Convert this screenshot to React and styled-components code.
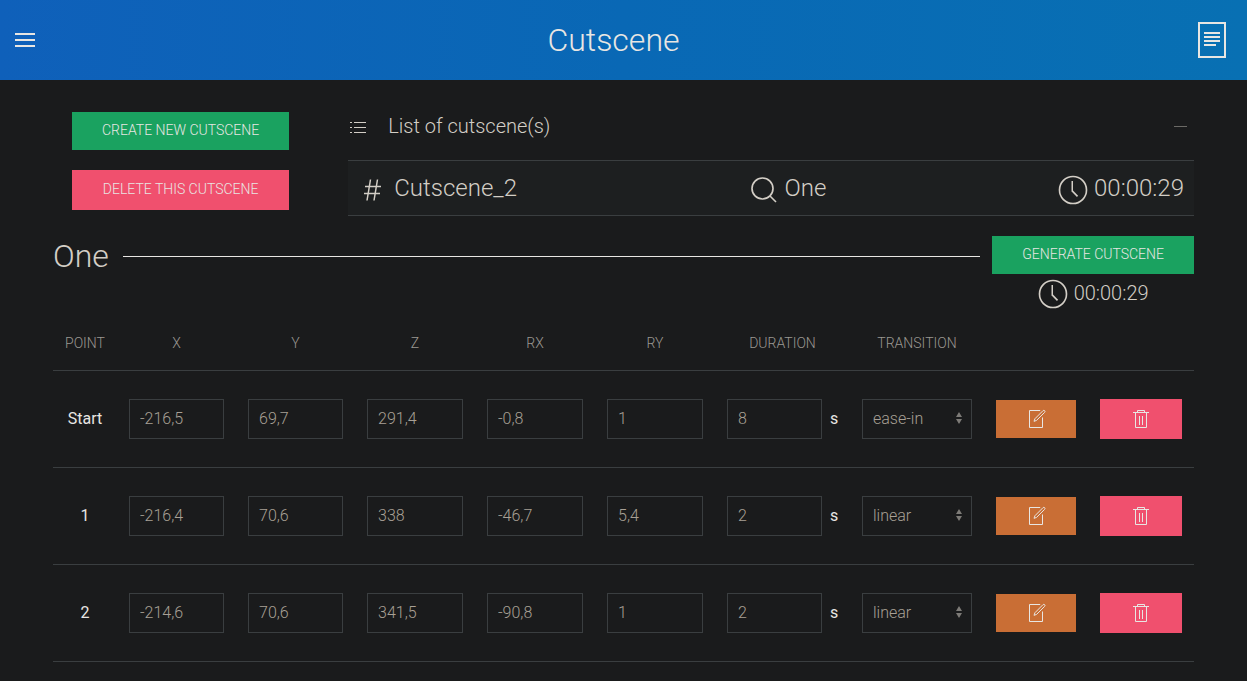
import React from "react";
import styled, { createGlobalStyle } from "styled-components";

const GlobalStyle = createGlobalStyle`
  *, *::before, *::after { box-sizing: border-box; }
  body {
    margin: 0;
    background: #1a1b1c;
    color: #d3cec6;
    font-family: Roboto, "Liberation Sans", sans-serif;
    font-size: 16px;
    font-weight: 300;
    line-height: 24px;
  }
`;

const Header = styled.header`
  display: flex;
  align-items: center;
  justify-content: space-between;
  height: 80px;
  padding: 0 15px;
  background: linear-gradient(to right, #0f60ba, #0968b5 50%, #0870b3);
  color: #e8e6e3;
`;

const PageTitle = styled.h1`
  margin: 0;
  font-size: 32px;
  font-weight: 300;
  line-height: 40px;
`;

const IconButton = styled.button`
  display: flex;
  padding: 0;
  border: 0;
  background: none;
  color: inherit;
  cursor: pointer;
`;

const Container = styled.main`
  padding: 32px 53px 0;
`;

const Top = styled.section`
  display: grid;
  grid-template-columns: calc(25% - 30px) 1fr;
  gap: 40px;
  align-items: start;
`;

const Actions = styled.div`
  display: grid;
  justify-content: center;
  gap: 20px;
`;

const tones = { green: "#1aa260", red: "#f0506e", orange: "#c96e35" };

const Button = styled.button`
  display: flex;
  align-items: center;
  justify-content: center;
  height: ${(p) => (p.$tone === "red" ? 40 : 38)}px;
  padding: 0 30px 2px;
  border: 0;
  background: ${(p) => tones[p.$tone]};
  color: #e8e6e3;
  font: 300 14px/36px Roboto, "Liberation Sans", sans-serif;
  text-transform: uppercase;
  white-space: nowrap;
  cursor: pointer;
`;

const RowButton = styled(Button)`
  padding: 0 ${(p) => (p.$tone === "red" ? 31 : 30)}px;
`;

const ListHeader = styled.div`
  display: flex;
  align-items: center;
  gap: 20px;
  height: 28px;
  margin-bottom: 20px;
  padding-right: 7px;

  > svg { margin-top: 4px; }
`;

const ListTitle = styled.h2`
  flex: 1;
  margin: 0;
  font-size: 20px;
  font-weight: 300;
  line-height: 28px;
`;

const ListRow = styled.div`
  display: flex;
  align-items: center;
  justify-content: space-between;
  height: 56px;
  padding: 0 10px 0 15px;
  border: solid #3a3e40;
  border-width: 1px 0;
  background: #1d1f20;
`;

const IconText = styled.span`
  display: flex;
  align-items: center;
  justify-self: center;
  gap: ${(p) => p.$gap || 6}px;
  font-size: ${(p) => (p.$small ? 20 : 24)}px;
  line-height: 30px;

  svg { margin-top: ${(p) => (p.$small ? 2 : 4)}px; }
`;

const Section = styled.section`
  display: grid;
  grid-template-columns: auto 1fr auto;
  column-gap: 12px;
  margin-top: 20px;
`;

const SectionTitle = styled.h2`
  margin: 0;
  font-size: 32px;
  font-weight: 300;
  line-height: 40px;
`;

const Rule = styled.hr`
  justify-self: stretch;
  height: 1px;
  margin: 20px 0 0 2px;
  border: 0;
  background: #e8e6e3;
`;

const Generate = styled.div`
  display: grid;
  row-gap: 3px;
`;

const Table = styled.table`
  width: 100%;
  margin-top: 7px;
  border-collapse: collapse;
  table-layout: fixed;

  tr { border-bottom: 1px solid #3a3e40; }
`;

const HeadCell = styled.th`
  width: ${(p) => (p.$width ? p.$width + "px" : "auto")};
  height: 54px;
  padding: 0;
  color: #9a9892;
  font-size: 14px;
  font-weight: 300;
  text-transform: uppercase;
`;

const Cell = styled.td`
  height: 97px;
  padding: 0 12px;
  font-weight: 400;
  color: #e8e6e3;
  text-align: ${(p) => (p.$center ? "center" : "left")};
`;

const Input = styled.input`
  display: block;
  width: 100%;
  height: 40px;
  padding: 0 10px;
  border: 1px solid #3a3e40;
  border-radius: 0;
  background: transparent;
  color: #a8a095;
  font: 300 16px/38px Roboto, "Liberation Sans", sans-serif;
`;

const Duration = styled.label`
  display: grid;
  grid-template-columns: 1fr 8px;
  align-items: center;
  gap: 8px;
`;

const SelectBox = styled.div`
  position: relative;

  svg {
    position: absolute;
    top: 10px;
    right: 1px;
    pointer-events: none;
  }
`;

const Select = styled(Input)`
  appearance: none;
`;

const svgProps = { viewBox: "0 0 20 20", fill: "none", stroke: "currentColor", "aria-hidden": true };

const MenuIcon = () => (
  <svg {...svgProps} width="20" height="20" stroke="none" fill="currentColor">
    <rect y="9" width="20" height="2" />
    <rect y="3" width="20" height="2" />
    <rect y="15" width="20" height="2" />
  </svg>
);

const FileIcon = () => (
  <svg {...svgProps} width="40" height="40" stroke="none" fill="currentColor">
    <rect x="3.5" y="1.5" width="13" height="17" fill="none" stroke="currentColor" />
    <path d="M6 6h8v1H6zM6 8h8v1H6zM6 10h8v1H6zM6 12h6v1H6z" />
  </svg>
);

const ListIcon = () => (
  <svg {...svgProps} width="20" height="20" stroke="none" fill="currentColor">
    <path d="M6 4h12v1H6zM6 9h12v1H6zM6 14h12v1H6zM2 4h2v1H2zM2 9h2v1H2zM2 14h2v1H2z" />
  </svg>
);

const HashIcon = () => (
  <svg {...svgProps} width="20" height="22" viewBox="0 0 20 22" strokeWidth="1.5">
    <path d="M7.5 0.5 4 21.5M14.5 0.5 11 21.5M2 7.5H18M1 14.5H17" />
  </svg>
);

const SearchIcon = () => (
  <svg {...svgProps} width="30" height="30" strokeWidth="1.1">
    <circle cx="9" cy="9" r="7" />
    <path d="M14 14 18 18" />
  </svg>
);

const ClockIcon = () => (
  <svg {...svgProps} width="30" height="30">
    <circle cx="10" cy="10" r="9" strokeWidth="1.1" />
    <rect x="9" y="4" width="1" height="7" stroke="none" fill="currentColor" />
    <path d="M13.018 14.197 9.445 10.625" strokeWidth="1.1" />
  </svg>
);

const CollapseIcon = () => (
  <svg width="13" height="13" viewBox="0 0 13 13" aria-hidden="true">
    <rect y="6" width="13" height="1" fill="#6b6a66" />
  </svg>
);

const SortIcon = () => (
  <svg width="24" height="20" viewBox="0 0 24 20" fill="#7d7b77" aria-hidden="true">
    <path d="M12 3 15 8 9 8ZM12 15 9 10 15 10Z" />
  </svg>
);

const EditIcon = () => (
  <svg {...svgProps} width="20" height="20">
    <path
      d="M18.65 1.68C18.41 1.45 18.109 1.33 17.81 1.33 17.499 1.33 17.209 1.45 16.98 1.68L8.92 9.76 8 12.33 10.55 11.41 18.651 3.34C19.12 2.87 19.12 2.15 18.65 1.68Z"
    />
    <path d="M16.5 8.482V18.5H3.5V1.5H14.211" />
  </svg>
);

const TrashIcon = () => (
  <svg {...svgProps} width="20" height="20">
    <path d="M6.5 3V1.5h7V3" />
    <path d="M4.5 4v14.5h11V4" />
    <path d="M8 7h1v9H8zM11 7h1v9h-1zM2 3h16v1H2z" stroke="none" fill="currentColor" />
  </svg>
);

const columns = [
  { label: "Point", width: 64 },
  { label: "X", width: 119 },
  { label: "Y", width: 119 },
  { label: "Z" },
  { label: "RX" },
  { label: "RY" },
  { label: "Duration", width: 135 },
  { label: "Transition", width: 134 },
  { label: "", width: 104 },
  { label: "", width: 106 },
];

const points = [
  { name: "Start", coords: ["-216,5", "69,7", "291,4", "-0,8", "1"], duration: "8", transition: "ease-in" },
  { name: "1", coords: ["-216,4", "70,6", "338", "-46,7", "5,4"], duration: "2", transition: "linear" },
  { name: "2", coords: ["-214,6", "70,6", "341,5", "-90,8", "1"], duration: "2", transition: "linear" },
];

function PointRow({ point }) {
  return (
    <tr>
      <Cell $center>{point.name}</Cell>
      {point.coords.map((value, i) => (
        <Cell key={i}>
          <Input aria-label={`${point.name} ${columns[i + 1].label}`} defaultValue={value} />
        </Cell>
      ))}
      <Cell>
        <Duration>
          <Input aria-label={`${point.name} duration`} defaultValue={point.duration} />s
        </Duration>
      </Cell>
      <Cell>
        <SelectBox>
          <Select as="select" aria-label={`${point.name} transition`} defaultValue={point.transition}>
            <option>linear</option>
            <option>ease-in</option>
          </Select>
          <SortIcon />
        </SelectBox>
      </Cell>
      <Cell>
        <RowButton $tone="orange" aria-label={`Edit ${point.name}`}><EditIcon /></RowButton>
      </Cell>
      <Cell>
        <RowButton $tone="red" aria-label={`Delete ${point.name}`}><TrashIcon /></RowButton>
      </Cell>
    </tr>
  );
}

export default function App() {
  return (
    <>
      <GlobalStyle />
      <Header>
        <IconButton aria-label="Menu"><MenuIcon /></IconButton>
        <PageTitle>Cutscene</PageTitle>
        <IconButton aria-label="Document"><FileIcon /></IconButton>
      </Header>
      <Container>
        <Top>
          <Actions>
            <Button $tone="green">Create new cutscene</Button>
            <Button $tone="red">Delete this cutscene</Button>
          </Actions>
          <div>
            <ListHeader>
              <ListIcon />
              <ListTitle>List of cutscene(s)</ListTitle>
              <IconButton aria-label="Collapse list"><CollapseIcon /></IconButton>
            </ListHeader>
            <ListRow>
              <IconText $gap={11}><HashIcon />Cutscene_2</IconText>
              <IconText><SearchIcon />One</IconText>
              <IconText><ClockIcon />00:00:29</IconText>
            </ListRow>
          </div>
        </Top>
        <Section>
          <SectionTitle>One</SectionTitle>
          <Rule />
          <Generate>
            <Button $tone="green">Generate cutscene</Button>
            <IconText $small><ClockIcon />00:00:29</IconText>
          </Generate>
        </Section>
        <Table>
          <thead>
            <tr>
              {columns.map((column, i) => (
                <HeadCell key={i} $width={column.width}>{column.label}</HeadCell>
              ))}
            </tr>
          </thead>
          <tbody>
            {points.map((point) => <PointRow key={point.name} point={point} />)}
          </tbody>
        </Table>
      </Container>
    </>
  );
}
